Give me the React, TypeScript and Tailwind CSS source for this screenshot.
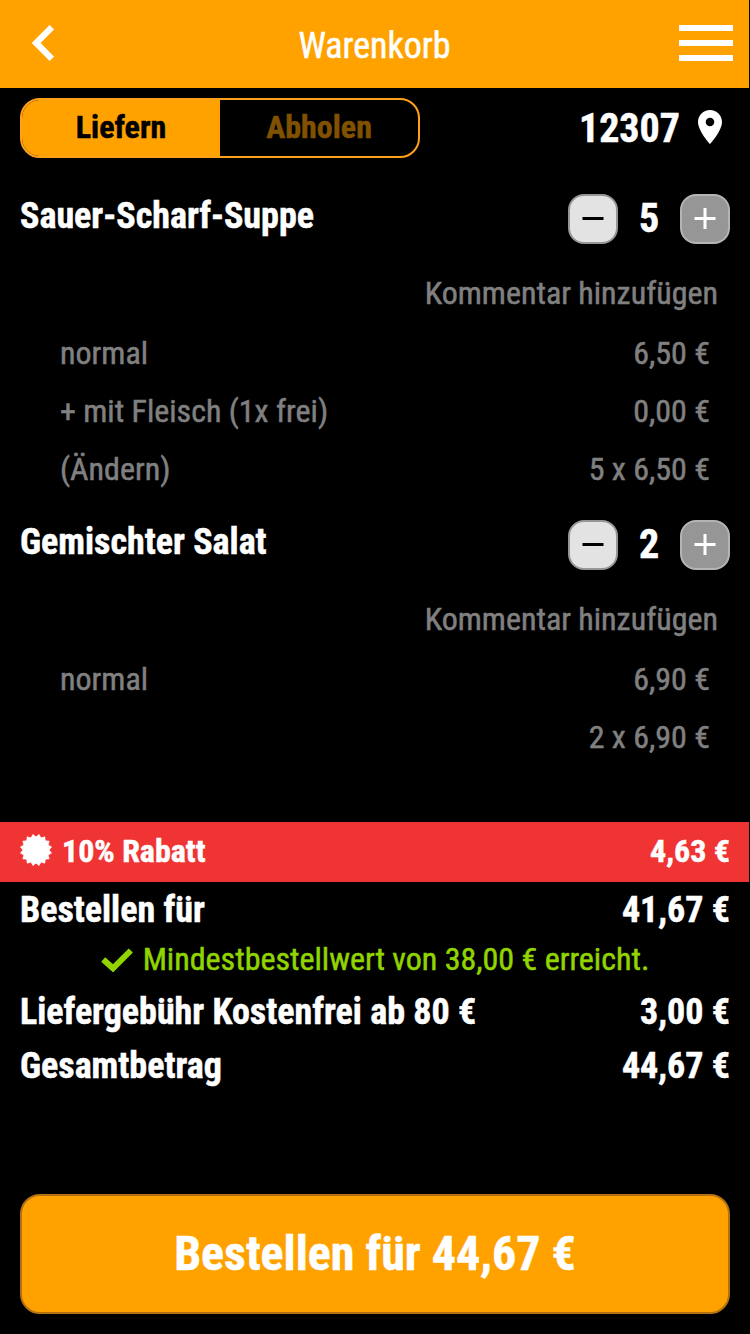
import React, { useState } from "react";

interface Line {
  label: string;
  price: string;
}

interface CartItem {
  name: string;
  count: number;
  lines: Line[];
}

const items: CartItem[] = [
  {
    name: "Sauer-Scharf-Suppe",
    count: 5,
    lines: [
      { label: "normal", price: "6,50 €" },
      { label: "+ mit Fleisch (1x frei)", price: "0,00 €" },
      { label: "(Ändern)", price: "5 x 6,50 €" },
    ],
  },
  {
    name: "Gemischter Salat",
    count: 2,
    lines: [
      { label: "normal", price: "6,90 €" },
      { label: "", price: "2 x 6,90 €" },
    ],
  },
];

// 16 pointed star of the discount row
const starPoints = Array.from({ length: 32 }, (_, i) => {
  const r = i % 2 === 0 ? 15.8 : 13;
  const a = (Math.PI * (i + 1)) / 16;
  return `${(16 + r * Math.sin(a)).toFixed(2)},${(16 - r * Math.cos(a)).toFixed(2)}`;
}).join(" ");

const ItemRow: React.FC<{ item: CartItem }> = ({ item }) => {
  const [count, setCount] = useState<number>(item.count);

  return (
    <div className="pb-3">
      <div className="flex h-[70px] items-center justify-between px-5">
        <h2 className="pb-[6px] text-4xl font-bold">{item.name}</h2>
        <div className="flex items-center">
          <button
            onClick={() => setCount(Math.max(0, count - 1))}
            className="flex h-[50px] w-[50px] items-center justify-center rounded-2xl border-2 border-[#969696] bg-[#e3e3e3]"
          >
            <svg width="22" height="22" viewBox="0 0 22 22" stroke="#000" strokeWidth="3">
              <path d="M0.5 10.5H21.5" />
            </svg>
          </button>
          <span className="w-[62px] pt-px pb-[2px] text-center text-[40px] leading-[47px] font-bold">
            {count}
          </span>
          <button
            onClick={() => setCount(count + 1)}
            className="flex h-[50px] w-[50px] items-center justify-center rounded-2xl border-2 border-[#b4b4b4] bg-[#969696]"
          >
            <svg width="22" height="22" viewBox="0 0 22 22" stroke="#fff" strokeWidth="3">
              <path d="M0.5 10.5H21.5M11 0V21" />
            </svg>
          </button>
        </div>
      </div>
      <div className="mt-[10px] mb-[2px] pr-8 text-right text-[32px] leading-[58px] text-[#808080]">
        Kommentar hinzufügen
      </div>
      {item.lines.map((line, i) => (
        <div
          key={i}
          className="flex justify-between pr-10 pl-[60px] text-[32px] leading-[58px] text-[#808080]"
        >
          <span>{line.label}</span>
          <span>{line.price}</span>
        </div>
      ))}
    </div>
  );
};

const App: React.FC = () => {
  return (
    <div className="flex h-[1334px] w-[750px] flex-col overflow-hidden bg-black font-['Roboto_Condensed',Roboto,sans-serif] whitespace-nowrap text-white [font-stretch:75%] [-webkit-text-stroke:0.5px_currentColor]">
      <header className="mr-px grid h-[88px] grid-cols-3 items-center bg-[#ffa200] pr-4 pl-8">
        <svg width="22" height="36" viewBox="0 0 22 36" fill="none" stroke="#fff" strokeWidth="6.2" className="-mt-[2px]">
          <path d="M19.8 2.2L4.2 18L19.8 33.8" />
        </svg>
        <h1 className="pt-1 pr-4 text-center text-4xl">Warenkorb</h1>
        <div className="-mt-[2px] flex flex-col items-end gap-[9px]">
          <div className="h-[6px] w-[54px] bg-white"></div>
          <div className="h-[6px] w-[54px] bg-white"></div>
          <div className="h-[6px] w-[54px] bg-white"></div>
        </div>
      </header>

      <div className="mt-[10px] flex h-[60px] shrink-0 items-center justify-between pr-7 pl-5">
        <div className="flex h-[60px] w-[400px] overflow-hidden rounded-[20px] border-2 border-[#ffa21a] text-center text-[32px] leading-[54px] font-bold">
          <div className="w-[198px] bg-[#ffa200] text-black">Liefern</div>
          <div className="w-[198px] text-[#805100]">Abholen</div>
        </div>
        <div className="flex items-center gap-[18px] text-[40px] leading-[59px] font-bold">
          <span className="pt-px">12307</span>
          <svg width="24" height="34" viewBox="5 2 14 20" preserveAspectRatio="none" fill="#fff" className="mb-[2px]">
            <path d="M12 2C8.13 2 5 5.13 5 9c0 5.25 7 13 7 13s7-7.75 7-13c0-3.87-3.13-7-7-7zm0 9.5a2.5 2.5 0 0 1 0-5 2.5 2.5 0 0 1 0 5z" />
          </svg>
        </div>
      </div>

      <div className="mt-[26px] h-[638px] shrink-0">
        {items.map((item) => (
          <ItemRow key={item.name} item={item} />
        ))}
      </div>

      <div className="mr-px flex h-[60px] shrink-0 justify-between bg-[#f03333] pr-[19px] pl-5 text-[32px] leading-[58px] font-bold">
        <div className="flex">
          <svg width="32" height="32" viewBox="0 0 32 32" fill="#fff" stroke="#fff" strokeWidth="0.8" strokeLinejoin="round" className="mt-3 mr-[10px]">
            <polygon points={starPoints} />
          </svg>
          10% Rabatt
        </div>
        <span>4,63 €</span>
      </div>

      <div className="flex justify-between px-5 text-4xl leading-[56px] font-bold">
        <span>Bestellen für</span>
        <span>41,67 €</span>
      </div>
      <div className="mb-[5px] flex justify-center text-[32px] leading-[42px] text-[#91d400]">
        <svg width="32" height="24" viewBox="0 0 32 24" fill="none" stroke="#91d400" strokeWidth="6" className="mt-[10px] mr-[10px]">
          <path d="M2.2 11.5L12 20.3L29.8 2.5" />
        </svg>
        Mindestbestellwert von 38,00 € erreicht.
      </div>
      <div className="flex justify-between px-5 text-4xl leading-[54px] font-bold">
        <span>Liefergebühr Kostenfrei ab 80 €</span>
        <span>3,00 €</span>
      </div>
      <div className="flex justify-between px-5 text-4xl leading-[54px] font-bold">
        <span>Gesamtbetrag</span>
        <span>44,67 €</span>
      </div>

      <button className="mx-5 mt-auto mb-5 h-[120px] shrink-0 rounded-[20px] border-2 border-[#b37112] bg-[#ffa200] text-5xl leading-[116px] font-bold">
        Bestellen für 44,67 €
      </button>
    </div>
  );
};

export default App;
